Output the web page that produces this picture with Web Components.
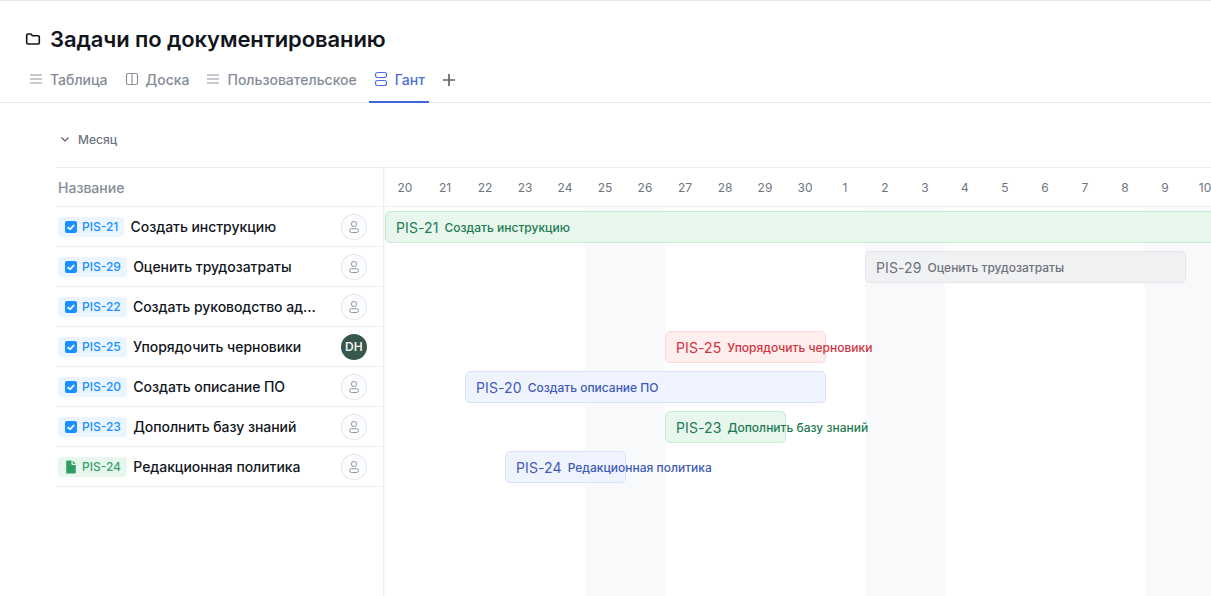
<!DOCTYPE html>
<html lang="ru">
<head>
<meta charset="utf-8">
<title>Гант</title>
<style>
  html, body { margin: 0; height: 596px; overflow: hidden; background: #fff; }
  body { font-family: Inter, "Liberation Sans", sans-serif; border-top: 1px solid #e4e6ea; box-sizing: border-box; display: flex; flex-direction: column; }
</style>
</head>
<body>
<page-title>Задачи по документированию</page-title>
<view-tabs></view-tabs>
<gantt-view></gantt-view>

<script>
const tasks = [
  { key: 'PIS-21', name: 'Создать инструкцию', start: 0, span: 22, color: 'green' },
  { key: 'PIS-29', name: 'Оценить трудозатраты', start: 12, span: 8, color: 'gray' },
  { key: 'PIS-22', name: 'Создать руководство ад...' },
  { key: 'PIS-25', name: 'Упорядочить черновики', start: 7, span: 4, color: 'red', owner: 'DH' },
  { key: 'PIS-20', name: 'Создать описание ПО', start: 2, span: 9, color: 'blue' },
  { key: 'PIS-23', name: 'Дополнить базу знаний', start: 7, span: 3, color: 'green' },
  { key: 'PIS-24', name: 'Редакционная политика', start: 3, span: 3, color: 'blue', kind: 'doc' }
];

const days = [20, 21, 22, 23, 24, 25, 26, 27, 28, 29, 30, 1, 2, 3, 4, 5, 6, 7, 8, 9, 10];
const weekends = [5, 12, 19];

class PageTitle extends HTMLElement {
  constructor() {
    super();
    this.attachShadow({ mode: 'open' });
    this.shadowRoot.innerHTML = `
      <style>
        :host { display: flex; align-items: center; gap: 9px; padding: 23px 25px 0; height: 30px; color: #12161c; }
        svg { width: 16px; height: 16px; flex: none; }
        h1 { margin: 0; font-size: 22px; line-height: 30px; font-weight: 600; letter-spacing: -0.1px; }
      </style>
      <svg viewBox="0 0 16 16" fill="none" stroke="currentColor" stroke-width="1.600" stroke-linejoin="round">
        <path d="M1.700 4.200a1.200 1.200 0 0 1 1.200-1.200h3l1.600 1.800h5.600a1.200 1.200 0 0 1 1.200 1.200v5.800a1.200 1.200 0 0 1-1.200 1.200H2.900a1.200 1.200 0 0 1-1.200-1.200z"/>
      </svg>
      <h1><slot></slot></h1>
    `;
  }
}

class ViewTabs extends HTMLElement {
  constructor() {
    super();
    this.attachShadow({ mode: 'open' });
    const lines = `<path d="M2 4h12M2 8h12M2 12h12"/>`;
    const board = `<rect x="2.500" y="2.500" width="11" height="11" rx="1.500"/><path d="M8 2.500v11"/>`;
    const gantt = `<rect x="2.500" y="1.500" width="11" height="5" rx="2"/><rect x="2.500" y="9.500" width="11" height="5" rx="2"/>`;
    const tabs = [
      { label: 'Таблица', icon: lines },
      { label: 'Доска', icon: board },
      { label: 'Пользовательское', icon: lines },
      { label: 'Гант', icon: gantt, active: true }
    ];
    this.shadowRoot.innerHTML = `
      <style>
        :host { display: flex; align-items: stretch; gap: 8px; height: 44px; margin-top: 4px; padding-left: 24px; border-bottom: 1px solid #e4e6ea; }
        .tab { display: flex; align-items: center; gap: 6px; padding: 0 4px 3px; margin-bottom: -1px; font-size: 14px; font-weight: 500; letter-spacing: -0.012px; color: #858c97; }
        .tab svg { width: 16px; height: 16px; flex: none; fill: none; stroke: #8d939d; stroke-width: 1.200; }
        .tab.active { color: #4a6ee0; box-shadow: inset 0 -2px 0 #3f66dc; }
        .tab.active svg { stroke: #4a6ee0; }
        .add { display: flex; align-items: center; margin-left: 4px; color: #5e646e; }
        .add svg { width: 16px; height: 16px; fill: none; stroke: currentColor; stroke-width: 1.700; }
      </style>
      ${tabs.map(t => `
        <div class="tab ${t.active ? 'active' : ''}">
          <svg viewBox="0 0 16 16">${t.icon}</svg>${t.label}
        </div>`).join('')}
      <div class="add"><svg viewBox="0 0 16 16"><path d="M8 2v12M2 8h12"/></svg></div>
    `;
  }
}

class TaskRow extends HTMLElement {
  constructor() {
    super();
    this.attachShadow({ mode: 'open' });
  }

  connectedCallback() {
    const doc = this.getAttribute('kind') === 'doc';
    const owner = this.getAttribute('owner');
    const icon = doc
      ? `<svg viewBox="0 0 14 14"><path fill="#2f9e63" d="M2.200 1.500a1 1 0 0 1 1-1h4.300v3.800a.7.7 0 0 0 .7.7h3.600v7.500a1 1 0 0 1-1 1H3.200a1 1 0 0 1-1-1z"/><path fill="#2f9e63" d="M8.700.700l3.100 3.100H8.700z"/></svg>`
      : `<svg viewBox="0 0 14 14"><rect x="1" y="1" width="12" height="12" rx="2" fill="#1890ff"/><path d="M3.800 7.100l2.300 2.200 4.100-4.300" fill="none" stroke="#fff" stroke-width="1.800"/></svg>`;
    this.shadowRoot.innerHTML = `
      <style>
        :host { display: flex; align-items: center; height: 40px; box-sizing: border-box; padding: 0 16px 0 2px; border-bottom: 1px solid #eceef1; }
        .tag { display: flex; align-items: center; gap: 4px; height: 20px; padding: 0 6px; border-radius: 4px; background: #ebf5ff; color: #1890ff; font-size: 12px; font-weight: 500; flex: none; }
        :host([kind="doc"]) .tag { background: #e8f7ed; color: #3a9f6a; }
        .tag svg { width: 14px; height: 14px; flex: none; }
        .name { flex: 1; margin-left: 6.300px; font-size: 14px; font-weight: 500; letter-spacing: -0.05px; color: #12161c; white-space: nowrap; }
        .avatar { width: 26px; height: 26px; border-radius: 50%; box-sizing: border-box; flex: none; display: flex; align-items: center; justify-content: center; }
        .empty { border: 1px dotted #c9cdd4; background: #fbfcfd; }
        .empty svg { width: 14px; height: 14px; fill: none; stroke: #9299a3; stroke-width: 1; }
        .filled { background: #36574a; color: #f2f5f3; font-size: 12px; font-weight: 600; letter-spacing: 0.3px; }
      </style>
      <div class="tag">${icon}${this.getAttribute('key')}</div>
      <div class="name"><slot></slot></div>
      ${owner
        ? `<div class="avatar filled">${owner}</div>`
        : `<div class="avatar empty"><svg viewBox="0 0 14 14"><circle cx="7" cy="4" r="2.600"/><rect x="2.500" y="8.700" width="9" height="3.800" rx="1.900"/></svg></div>`}
    `;
  }
}

class GanttBar extends HTMLElement {
  constructor() {
    super();
    this.attachShadow({ mode: 'open' });
    this.shadowRoot.innerHTML = `
      <style>
        :host { display: flex; align-items: center; gap: 6px; box-sizing: border-box; height: 32px; margin: 4px -1px 4px 0; padding: 0 10px; border: 1px solid; border-radius: 5px; white-space: nowrap; font-size: 12px; font-weight: 500; z-index: 1; }
        :host([color="green"]) { background: #e7f7ed; border-color: #c7ead4; color: #1f7a52; }
        :host([color="gray"]) { background: #f0f1f3; border-color: #e3e5e8; color: #6d727b; }
        :host([color="red"]) { background: #ffeeee; border-color: #fdd8da; color: #d0343f; }
        :host([color="blue"]) { background: #eff3fe; border-color: #d8e2fb; color: #3f5bb5; }
        .key { font-size: 14px; font-weight: 400; letter-spacing: 0.1px; }
      </style>
      <span class="key"></span><slot></slot>
    `;
  }

  connectedCallback() {
    this.shadowRoot.querySelector('.key').textContent = this.getAttribute('key');
  }
}

class GanttView extends HTMLElement {
  constructor() {
    super();
    this.attachShadow({ mode: 'open' });
  }

  connectedCallback() {
    this.shadowRoot.innerHTML = `
      <style>
        :host { display: block; flex: 1; min-height: 0; padding-left: 56px; overflow: hidden; }
        .toolbar { display: flex; align-items: center; gap: 7px; height: 64px; box-sizing: border-box; padding: 8px 0 0 3px; font-size: 12px; font-weight: 500; color: #6d737d; }
        .toolbar svg { width: 12px; height: 12px; fill: none; stroke: #555b65; stroke-width: 1.200; }
        .chart { display: grid; grid-template-columns: 328px 1fr; border-top: 1px solid #eceef1; height: 430px; }
        .list { border-right: 1px solid #eceef1; box-shadow: 2px 0 4px rgba(30, 40, 60, 0.03); position: relative; z-index: 2; background: #fff; }
        .list-head { display: flex; align-items: center; height: 39px; box-sizing: border-box; padding-left: 2px; border-bottom: 1px solid #eceef1; font-size: 14px; font-weight: 500; color: #858c97; }
        .timeline { overflow: hidden; margin-left: 1px; }
        .grid { display: grid; grid-template-columns: repeat(21, 40px); grid-template-rows: 39px repeat(7, 40px) 1fr; height: 100%; }
        .day { grid-row: 1; display: flex; align-items: center; justify-content: center; font-size: 12px; color: #6f747d; border-bottom: 1px solid #eceef1; }
        .weekend { grid-row: 2 / -1; background: #f8f9fb; }
      </style>
      <div class="toolbar">
        <svg viewBox="0 0 12 12"><path d="M2.500 4.500 6 8l3.500-3.500"/></svg>Месяц
      </div>
      <div class="chart">
        <div class="list">
          <div class="list-head">Название</div>
          ${tasks.map(t => `<task-row key="${t.key}" ${t.owner ? `owner="${t.owner}"` : ''} ${t.kind ? `kind="${t.kind}"` : ''}>${t.name}</task-row>`).join('')}
        </div>
        <div class="timeline">
          <div class="grid">
            ${days.map((d, i) => `<div class="day" style="grid-column:${i + 1}">${d}</div>`).join('')}
            ${weekends.map(w => `<div class="weekend" style="grid-column:${w + 1} / span 2"></div>`).join('')}
            ${tasks.map((t, i) => t.color ? `<gantt-bar key="${t.key}" color="${t.color}" style="grid-row:${i + 2};grid-column:${t.start + 1} / span ${t.span}">${t.name}</gantt-bar>` : '').join('')}
          </div>
        </div>
      </div>
    `;
  }
}

customElements.define('page-title', PageTitle);
customElements.define('view-tabs', ViewTabs);
customElements.define('task-row', TaskRow);
customElements.define('gantt-bar', GanttBar);
customElements.define('gantt-view', GanttView);
</script>
</body>
</html>
